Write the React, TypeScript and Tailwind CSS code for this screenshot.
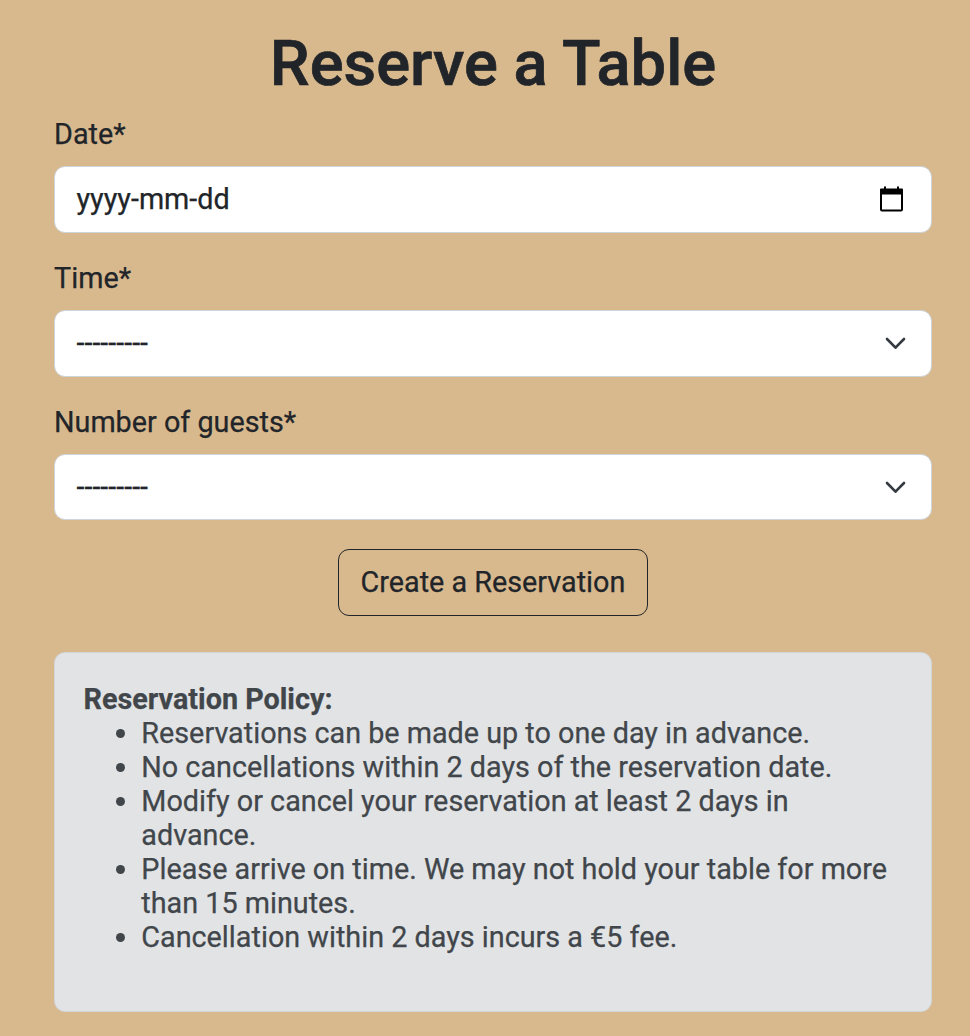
import React from 'react';

const policies = [
  'Reservations can be made up to one day in advance.',
  'No cancellations within 2 days of the reservation date.',
  'Modify or cancel your reservation at least 2 days in advance.',
  'Please arrive on time. We may not hold your table for more than 15 minutes.',
  'Cancellation within 2 days incurs a €5 fee.',
];

function SelectField({ label, className }: { label: string; className: string }) {
  return (
    <div className="mb-[29px]">
      <label className="block h-[32px] leading-[32px]">{label}</label>
      <button type="button" className={`mt-[16px] flex w-full items-center justify-between rounded-[11px] border border-[#ced4da] bg-white pl-[21.5px] pr-[25px] ${className}`}>
        <span>---------</span>
        <svg width="21" height="14" viewBox="0 0 21 14" fill="none" stroke="#343a40" strokeWidth="2.6" strokeLinecap="round" strokeLinejoin="round">
          <path d="M2 2 10.5 10.7 19 2" />
        </svg>
      </button>
    </div>
  );
}

export default function App() {
  return (
    <main className="h-[1036px] w-full overflow-hidden bg-[#d8b88d] pl-[54px] pr-[38px] pt-[27px] font-['Roboto',sans-serif] text-[28.77px] text-[#212529] [-webkit-text-stroke:0.25px]">
      <h1 className="h-[72px] text-center text-[63.3px] font-medium leading-[72px] [-webkit-text-stroke:0.7px]">Reserve a Table</h1>
      <form className="pt-[19px]">
        <div className="mb-[29px]">
          <label className="block h-[32px] leading-[32px]">Date*</label>
          <div className="mt-[16px] flex h-[67px] items-center justify-between rounded-[11px] border border-[#ced4da] bg-white pl-[21.5px] pr-[27px]">
            <span>yyyy-mm-dd</span>
            <svg className="mb-[2px]" width="25" height="26" viewBox="0 0 25 26" fill="none">
              <rect x="2" y="4" width="21" height="20.4" rx="1" stroke="#000" strokeWidth="2" />
              <path d="M2 2.5h21q1 0 1 1v5H1v-5q0-1 1-1zM5 .5h2v3H5zM18 .5h2v3h-2z" fill="#000" />
            </svg>
          </div>
        </div>
        <SelectField label="Time*" className="h-[67px]" />
        <SelectField label="Number of guests*" className="h-[66px] pt-[1px]" />
        <button type="button" className="mx-auto block h-[67px] w-[310px] whitespace-nowrap rounded-[11px] border border-[#212529]">Create a Reservation</button>
      </form>
      <section className="mt-[36px] h-[360px] rounded-[11px] border border-[#d3d5d8] bg-[#e2e3e5] px-[28.5px] pt-[29px] leading-[34px] text-[#41464b]">
        <h2 className="font-bold">Reservation Policy:</h2>
        <ul className="list-disc pl-[57.8px]">
          {policies.map((p) => <li key={p}>{p}</li>)}
        </ul>
      </section>
    </main>
  );
}
